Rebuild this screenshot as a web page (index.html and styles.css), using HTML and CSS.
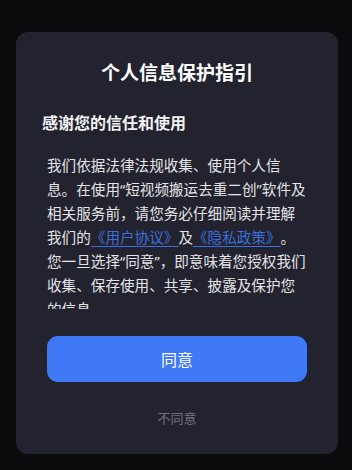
FILE: index.html
```html
<!DOCTYPE html>
<html lang="zh-CN">
<head>
    <meta charset="UTF-8">
    <meta name="viewport" content="width=device-width, initial-scale=1.0">
    <title>个人信息保护指引</title>
    <link rel="stylesheet" href="styles.css">
</head>
<body>
    <div class="dialog">
        <h1 class="title">个人信息保护指引</h1>
        <h2 class="subtitle">感谢您的信任和使用</h2>
        <div class="content">
            <p>我们依据法律法规收集、使用个人信息。在使用“短视频搬运去重二创”软件及相关服务前，请您务必仔细阅读并理解我们的<a href="#" class="link">《用户协议》</a>及<a href="#" class="link">《隐私政策》</a>。您一旦选择“同意”，即意味着您授权我们收集、保存使用、共享、披露及保护您的信息。</p>
        </div>
        <button class="btn agree">同意</button>
        <button class="btn disagree">不同意</button>
    </div>
</body>
</html>
```

FILE: styles.css
```css
* {
  margin: 0;
  padding: 0;
  box-sizing: border-box;
}
body {
  background-color: #0b0b0e;
  font-family: "Noto Sans", "Noto Sans CJK SC", sans-serif;
  padding: 32px 14px 16px 16px;
  text-spacing-trim: space-all;
}
.dialog {
  background-color: #22232e;
  border-radius: 12px;
  width: 322px;
  padding: 28px 31px 26px 31px;
  display: flex;
  flex-direction: column;
}
.title {
  color: #fff;
  font-size: 19px;
  font-weight: bold;
  line-height: 27px;
  text-align: center;
}
.subtitle {
  color: #f2f2f4;
  font-size: 16px;
  font-weight: bold;
  line-height: 24px;
  margin: 24px 0 0 -5px;
}
.content {
  margin-top: 18px;
  height: 156px;
  overflow: hidden;
}
.content p {
  color: #e4e4e8;
  font-size: 14.6px;
  line-height: 24px;
  line-break: strict;
}
.link {
  color: #3a6fdc;
  text-decoration: underline;
  text-underline-offset: 3px;
}
.btn {
  border: none;
  font-family: inherit;
  cursor: pointer;
}
.btn.agree {
  margin-top: 27px;
  height: 46px;
  border-radius: 11px;
  background-color: #3f79f6;
  color: #fff;
  font-size: 16px;
}
.btn.disagree {
  margin-top: 26px;
  background: none;
  color: #6e717b;
  font-size: 13px;
  line-height: 20px;
}
```
